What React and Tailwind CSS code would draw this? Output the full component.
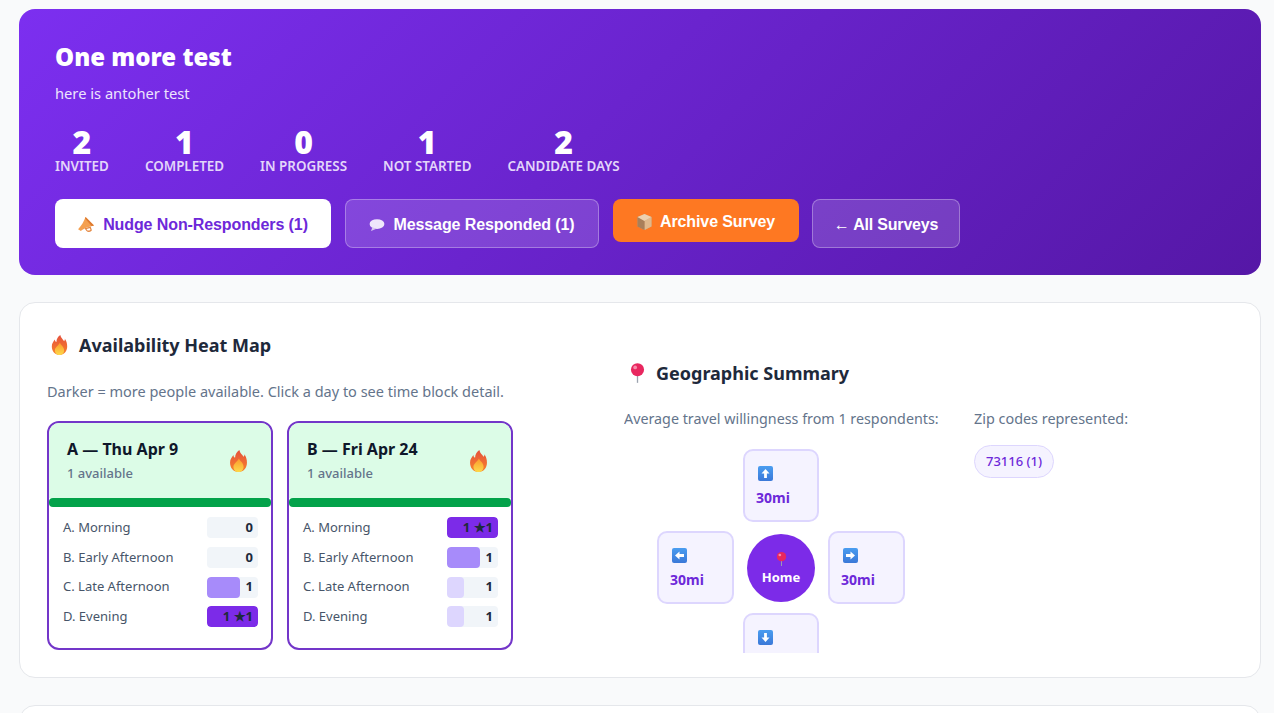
import React from 'react'

const BODY = "font-['Noto_Sans','Open_Sans',sans-serif]"

const stats = [
  ['2', 'Invited'],
  ['1', 'Completed'],
  ['0', 'In Progress'],
  ['1', 'Not Started'],
  ['2', 'Candidate Days'],
]

const days = [
  {
    title: 'A — Thu Apr 9',
    rows: [
      ['A. Morning', 0, '0'],
      ['B. Early Afternoon', 0, '0'],
      ['C. Late Afternoon', 65, '1'],
      ['D. Evening', 100, '1 ★1'],
    ],
  },
  {
    title: 'B — Fri Apr 24',
    rows: [
      ['A. Morning', 100, '1 ★1'],
      ['B. Early Afternoon', 65, '1'],
      ['C. Late Afternoon', 33, '1'],
      ['D. Evening', 33, '1'],
    ],
  },
]

function Fire({ className }) {
  return (
    <svg viewBox="0 0 20 26" className={className}>
      <defs>
        <linearGradient id="fireOuter" x1="0" y1="0" x2="0" y2="1">
          <stop offset="0" stopColor="#e5503c" />
          <stop offset="1" stopColor="#f8842c" />
        </linearGradient>
        <linearGradient id="fireInner" x1="0" y1="0" x2="0" y2="1">
          <stop offset="0" stopColor="#fb9a2c" />
          <stop offset="1" stopColor="#fdd94a" />
        </linearGradient>
      </defs>
      <path d="M11 0c1 4 3 5 5 8 1-1 1-2 1-3 2 3 3 6 3 10 0 6-4 11-10 11S0 21 0 15c0-4 2-6 4-9 0 2 1 3 2 3 0-4 2-7 5-9z" fill="url(#fireOuter)" />
      <path d="M10.500 10c1 3 5.500 5 5.500 10 0 3-2.500 6-6 6S4 23 4 20c0-4 4.500-6 6.500-10z" fill="url(#fireInner)" />
    </svg>
  )
}

function Pin({ className }) {
  return (
    <svg viewBox="0 0 16 21" className={className}>
      <rect x="7.300" y="11" width="1.400" height="10" fill="#9ca3af" />
      <circle cx="8" cy="7" r="7" fill="#e8275f" />
      <circle cx="5.500" cy="4.500" r="2" fill="#f98bab" />
    </svg>
  )
}

function Megaphone() {
  return (
    <svg viewBox="0 0 18 16" className="w-[17px] h-[15px] shrink-0">
      <path d="M0 13C4 9 6 5 8 0l9 9c-5 1-11 3-14 6z" fill="#f4a050" />
      <path d="M8 0l9 9-2.500.5L7.500 1.500z" fill="#dd7a30" />
      <path d="M8 12.500l5-1.500 1 3c-1 1.500-3.500 1.500-4.500.5z" fill="none" stroke="#e58a45" strokeWidth="1.400" />
    </svg>
  )
}

function Balloon() {
  return (
    <svg viewBox="0 0 17 13" className="w-[16px] h-[12px] shrink-0">
      <ellipse cx="8.500" cy="5.500" rx="8" ry="5.300" fill="#efe7fb" />
      <path d="M3.500 9L2 13l6-2.500z" fill="#d8c9f0" />
    </svg>
  )
}

function Box() {
  return (
    <svg viewBox="0 0 15 16" className="w-[15px] h-[16px] shrink-0">
      <path d="M7.500 0l7 3v9.500L7.500 16 .5 12.500V3z" fill="#c9986a" />
      <path d="M7.500 7l7-4v9.500L7.500 16z" fill="#e0b88c" />
      <path d="M7.500 7L.5 3v9.500L7.500 16z" fill="#a97f5a" />
      <path d="M7.500 0l7 3-7 4-7-4z" fill="#edd0ae" />
    </svg>
  )
}

function ArrowBox({ dir }) {
  const rotate = { up: 'rotate-0', right: 'rotate-90', down: 'rotate-180', left: '-rotate-90' }[dir]
  return (
    <span className="block ml-[2px] w-[15px] h-[15px] rounded-[2px] bg-gradient-to-b from-[#4a9df0] to-[#3b78d8]">
      <svg viewBox="0 0 15 15" className={`w-[15px] h-[15px] ${rotate}`}>
        <path d="M7.500 3l4 4.500H8.900V12H6.100V7.500H3.500z" fill="#ffffff" />
      </svg>
    </span>
  )
}

function DirBox({ dir, className }) {
  return (
    <div className={`h-[73px] rounded-[10px] border-2 border-[#ddd6fe] bg-[#f5f3ff] pl-[11px] pt-[15px] ${className}`}>
      <ArrowBox dir={dir} />
      <div className="mt-[7px] text-[14px] leading-[19px] font-bold text-[#6d28d9]">30mi</div>
    </div>
  )
}

function SlotRow({ label, pct, text }) {
  return (
    <div className="flex items-center justify-between h-[21px] mb-[8.8px]">
      <span className="text-[13px] text-[#475569]">{label}</span>
      <div className="relative w-[51px] h-[21px] rounded-[4px] bg-[#f1f5f9] overflow-hidden">
        <div
          className={`absolute inset-y-0 left-0 rounded-[4px] ${pct === 100 ? 'bg-[#7c2be8]' : pct === 65 ? 'bg-[#a78bfa]' : 'bg-[#ddd6fe]'}`}
          style={{ width: `${pct}%` }}
        />
        <div className="absolute inset-0 flex items-center justify-end pr-[5px] text-[13px] font-bold text-[#1e293b]">{text}</div>
      </div>
    </div>
  )
}

function DayCard({ day }) {
  return (
    <div className="w-[226px] h-[229px] rounded-[12px] border-2 border-[#7336c9] overflow-hidden">
      <div className="bg-[#dcfce7] h-[75px] pl-[18px] pr-[24px] flex items-center justify-between">
        <div>
          <div className="text-[16px] leading-[20px] font-bold text-[#0f172a] whitespace-nowrap">{day.title}</div>
          <div className="mt-[5px] text-[13px] leading-[18px] font-medium text-[#64748b]">1 available</div>
        </div>
        <Fire className="w-[17px] h-[22px]" />
      </div>
      <div className="h-[9px] bg-[#03a24a] rounded-[4px]" />
      <div className="pl-[14px] pr-[13px] pt-[10px]">
        {day.rows.map((r) => (
          <SlotRow key={r[0]} label={r[0]} pct={r[1]} text={r[2]} />
        ))}
      </div>
    </div>
  )
}

export default function App() {
  return (
    <div className={`${BODY} h-[713px] overflow-hidden bg-[#f9fafb] pt-[9px] px-[13px] pl-[19px]`}>
      <header className="rounded-[16px] bg-[linear-gradient(135deg,#7c2ff0,#5517a6)] h-[266px] px-[36px] pt-[33px] text-white">
        <h1 className="text-[24px] leading-[30px] font-black">One more test</h1>
        <p className="mt-[11px] text-[14.7px] leading-[20px] text-[#ede4fd]">here is antoher test</p>
        <div className="mt-[22px] flex gap-[36px]">
          {stats.map(([n, label]) => (
            <div key={label} className="flex flex-col items-center">
              <div className="text-[32px] leading-[33px] font-black">{n}</div>
              <div className="text-[13.4px] leading-[16px] font-semibold uppercase text-[#e3d6fa] whitespace-nowrap">{label}</div>
            </div>
          ))}
        </div>
        <div className="mt-[25px] flex items-start font-['Liberation_Sans',sans-serif] text-[16px] font-bold tracking-[-0.1px]">
          <button className="h-[49px] w-[276px] pt-[2px] rounded-[8px] bg-white text-[#6d28d9] flex items-center justify-center gap-[8px]">
            <Megaphone /> Nudge Non-Responders (1)
          </button>
          <button className="ml-[14px] h-[49px] w-[254px] pt-[2px] rounded-[8px] bg-white/15 border border-white/30 flex items-center justify-center gap-[8px]">
            <Balloon /> Message Responded (1)
          </button>
          <button className="ml-[14px] h-[43px] w-[186px] pt-[2px] rounded-[8px] bg-[#fe7822] flex items-center justify-center gap-[8px]">
            <Box /> Archive Survey
          </button>
          <button className="ml-[13px] h-[49px] w-[148px] pt-[2px] rounded-[8px] bg-white/15 border border-white/30 flex items-center justify-center tracking-[-0.2px]">
            ← All Surveys
          </button>
        </div>
      </header>

      <section className="mt-[27px] h-[376px] rounded-[16px] border border-[#e5e7eb] bg-white px-[27px] pt-[27px] grid grid-cols-[577px_1fr]">
        <div>
          <h2 className="flex items-center gap-[11px] text-[18px] leading-[30px] font-bold text-[#1e293b]">
            <Fire className="w-[17px] h-[20px] ml-[4px]" /> Availability Heat Map
          </h2>
          <p className="mt-[21px] text-[14.5px] leading-[20px] text-[#64748b] whitespace-nowrap">
            Darker = more people available. Click a day to see time block detail.
          </p>
          <div className="mt-[20px] flex gap-[14px]">
            {days.map((d) => (
              <DayCard key={d.title} day={d} />
            ))}
          </div>
        </div>

        <div>
          <h2 className="mt-[28px] flex items-center gap-[11px] text-[18px] leading-[30px] font-bold text-[#1e293b]">
            <Pin className="w-[15px] h-[20px] ml-[6px]" /> Geographic Summary
          </h2>
          <div className="mt-[21px] flex gap-[36px] h-[244px] overflow-hidden">
            <div className="w-[314px]">
              <p className="text-[14.3px] leading-[20px] text-[#64748b] whitespace-nowrap">
                Average travel willingness from 1 respondents:
              </p>
              <div className="mt-[20px] mx-auto w-[248px] grid grid-cols-[77px_76px_77px] gap-[9px]">
                <DirBox dir="up" className="col-start-2" />
                <DirBox dir="left" className="col-start-1" />
                <div className="self-center justify-self-center w-[68px] h-[68px] rounded-full bg-[#7c2be8] flex flex-col items-center pt-[18px] text-white">
                  <Pin className="w-[11px] h-[14px]" />
                  <div className="mt-[3px] text-[13px] leading-[16px] font-bold">Home</div>
                </div>
                <DirBox dir="right" />
                <DirBox dir="down" className="col-start-2" />
              </div>
            </div>
            <div>
              <p className="text-[14.4px] leading-[20px] text-[#64748b]">Zip codes represented:</p>
              <span className="mt-[16px] inline-block h-[33px] rounded-full border border-[#ddd6fe] bg-[#f5f3ff] px-[11px] text-[13px] leading-[31px] font-medium text-[#6d28d9]">
                73116 (1)
              </span>
            </div>
          </div>
        </div>
      </section>

      <section className="mt-[27px] h-[60px] rounded-[16px] border border-[#e5e7eb] bg-white" />
    </div>
  )
}
